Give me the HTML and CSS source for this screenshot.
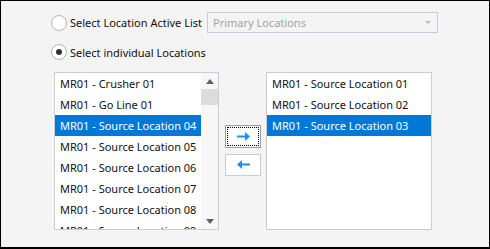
FILE: index.html
```html
<!DOCTYPE html>
<html lang="en">
<head>
    <meta charset="UTF-8">
    <title>Select Locations</title>
    <link rel="stylesheet" href="styles.css">
</head>
<body>
    <div class="window">
        <div class="option">
            <span class="radio"></span>
            <span class="option-label">Select Location Active List</span>
            <div class="dropdown">
                <span>Primary Locations</span>
                <span class="caret"></span>
            </div>
        </div>

        <div class="option second">
            <span class="radio checked"></span>
            <span class="option-label">Select individual Locations</span>
        </div>

        <div class="lists">
            <div class="listbox">
                <div class="items">
                    <div class="item">MR01 - Crusher 01</div>
                    <div class="item">MR01 - Go Line 01</div>
                    <div class="item selected">MR01 - Source Location 04</div>
                    <div class="item">MR01 - Source Location 05</div>
                    <div class="item">MR01 - Source Location 06</div>
                    <div class="item">MR01 - Source Location 07</div>
                    <div class="item">MR01 - Source Location 08</div>
                    <div class="item">MR01 - Source Location 09</div>
                </div>
                <div class="scrollbar">
                    <span class="scroll-btn"><span class="tri up"></span></span>
                    <span class="thumb"></span>
                    <span class="track"></span>
                    <span class="scroll-btn"><span class="tri down"></span></span>
                </div>
            </div>

            <div class="buttons">
                <button class="move focused">
                    <svg width="13" height="9" viewBox="0 0 13 9"><path d="M0 3.5h8V0l5 4.5L8 9V5.5H0z" fill="#1e8ff0"/></svg>
                </button>
                <button class="move">
                    <svg width="13" height="9" viewBox="0 0 13 9"><path d="M13 3.5H5V0L0 4.5 5 9V5.5h8z" fill="#1e8ff0"/></svg>
                </button>
            </div>

            <div class="listbox right">
                <div class="items">
                    <div class="item">MR01 - Source Location 01</div>
                    <div class="item">MR01 - Source Location 02</div>
                    <div class="item selected">MR01 - Source Location 03</div>
                </div>
            </div>
        </div>
    </div>
</body>
</html>
```

FILE: styles.css
```css
body {
    margin: 0;
    font-family: "Segoe UI", "Noto Sans", sans-serif;
    font-size: 11px;
    color: #111;
}
.window {
    width: 490px;
    height: 249px;
    box-sizing: border-box;
    border: 1px solid #000;
    border-bottom-width: 2px;
    background-color: #f4f4f4;
    padding-top: 11px;
}
.option {
    display: flex;
    align-items: center;
    height: 21px;
    padding-left: 50px;
}
.option.second {
    height: 16px;
    margin-top: 11px;
}
.radio {
    width: 16px;
    height: 16px;
    box-sizing: border-box;
    border: 1px solid #b4b4b4;
    border-radius: 50%;
    background-color: #fff;
    margin-right: 3px;
    display: flex;
    align-items: center;
    justify-content: center;
}
.radio.checked::after {
    content: "";
    width: 6px;
    height: 6px;
    border-radius: 50%;
    background-color: #333;
}
.option-label {
    width: 137px;
    white-space: nowrap;
}
.dropdown {
    width: 231px;
    height: 21px;
    box-sizing: border-box;
    border: 1px solid #c9c9dc;
    display: flex;
    align-items: center;
    justify-content: space-between;
    padding: 0 6px 0 5px;
    color: #a3a3a3;
}
.caret {
    width: 0;
    height: 0;
    border-left: 3px solid transparent;
    border-right: 3px solid transparent;
    border-top: 3px solid #b8b8b8;
}
.lists {
    display: flex;
    align-items: center;
    margin-top: 12px;
    padding-left: 53px;
}
.listbox {
    width: 165px;
    height: 158px;
    box-sizing: border-box;
    border: 1px solid #cccbdb;
    background-color: #fff;
    display: flex;
    overflow: hidden;
}
.listbox.right {
    width: 166px;
}
.items {
    flex: 1;
    min-width: 0;
}
.item {
    height: 21px;
    line-height: 21px;
    padding-left: 5px;
    white-space: nowrap;
    overflow: hidden;
}
.item.selected {
    background-color: #0078d7;
    color: #fff;
}
.scrollbar {
    width: 17px;
    display: flex;
    flex-direction: column;
    background-color: #f7f7f7;
}
.scroll-btn {
    height: 16px;
    display: flex;
    align-items: center;
    justify-content: center;
}
.thumb {
    height: 16px;
    background-color: #dcdcdf;
}
.track {
    flex: 1;
}
.tri {
    width: 0;
    height: 0;
    border-left: 4px solid transparent;
    border-right: 4px solid transparent;
}
.tri.up {
    border-bottom: 5px solid #606060;
}
.tri.down {
    border-top: 5px solid #606060;
}
.buttons {
    display: flex;
    flex-direction: column;
    gap: 6px;
    margin: 0 5px 2px 6px;
}
.move {
    width: 36px;
    height: 22px;
    padding: 0;
    border: 1px solid #cccbdb;
    background-color: #fff;
    display: flex;
    align-items: center;
    justify-content: center;
}
.move.focused {
    height: 23px;
    border-color: #a0a0a0;
    outline: 1px dotted #000;
    outline-offset: -3px;
}
```
